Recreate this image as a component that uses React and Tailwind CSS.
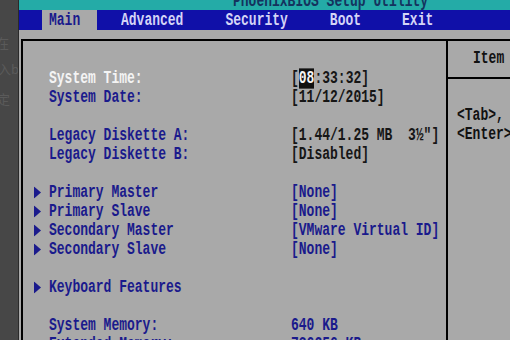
import React from 'react';

const Arrow = () => (
  <svg width="7" height="9" viewBox="0 0 7 9" className="block">
    <polygon points="0,0 7,4.5 0,9" fill="#1a1a8c" />
  </svg>
);

const rows = [
  { label: 'System Time:', value: 'time', labelCls: 'text-[#f4f4f4]' },
  { label: 'System Date:', value: '[11/12/2015]', valueCls: 'text-[#161616]' },
  null,
  { label: 'Legacy Diskette A:', value: '[1.44/1.25 MB  3½"]', valueCls: 'text-[#161616]' },
  { label: 'Legacy Diskette B:', value: '[Disabled]', valueCls: 'text-[#161616]' },
  null,
  { label: 'Primary Master', value: '[None]', arrow: true },
  { label: 'Primary Slave', value: '[None]', arrow: true },
  { label: 'Secondary Master', value: '[VMware Virtual ID]', arrow: true },
  { label: 'Secondary Slave', value: '[None]', arrow: true },
  null,
  { label: 'Keyboard Features', arrow: true },
  null,
  { label: 'System Memory:', value: '640 KB' },
  { label: 'Extended Memory:', value: '736256 KB' },
];

const Row = ({ row }) => {
  if (!row) return <div className="h-[19px] shrink-0" />;
  return (
    <div className="h-[19px] shrink-0 flex items-center pl-[11px] scale-y-[1.35] whitespace-pre">
      <div className="w-[15px] flex items-center">{row.arrow && <Arrow />}</div>
      <div className={`w-[242px] ${row.labelCls || 'text-[#1a1a8c]'}`}>{row.label}</div>
      {row.value === 'time' ? (
        <div className="text-[#161616]">
          [<span className="bg-[#101010] text-[#f4f4f4]">08</span>:33:32]
        </div>
      ) : (
        row.value && <div className={row.valueCls || 'text-[#1a1a8c]'}>{row.value}</div>
      )}
    </div>
  );
};

export default function App() {
  return (
    <div className="flex w-[510px] h-[340px] overflow-hidden bg-[#474747] font-['Liberation_Mono',monospace] text-[13px] font-bold leading-none">
      {/* page behind the VM window */}
      <div className="w-[19px] shrink-0 overflow-hidden border-r border-[#2a2a2a] text-[#5a5a5a] font-normal font-['Noto_Sans_CJK_SC',sans-serif] text-[13px] leading-[13px]">
        <div className="mt-[36px] -ml-[4px] whitespace-nowrap">在</div>
        <div className="mt-[13px] -ml-[2px] whitespace-nowrap">入b</div>
        <div className="mt-[17px] -ml-[3px] whitespace-nowrap">定</div>
      </div>

      <div className="flex-1 flex flex-col bg-[#a9a9a9] min-w-0 min-h-0">
        <div className="h-[10px] shrink-0 bg-[#24aba7] overflow-hidden">
          <div className="h-[19px] -mt-[8px] flex items-center pl-[214px] text-[#14335e] scale-y-[1.35] whitespace-pre">
            PhoenixBIOS Setup Utility
          </div>
        </div>

        <div className="h-[20px] shrink-0 bg-[#1010a8] flex items-stretch pl-[23px] text-[#d4d4f6] whitespace-pre">
          <div className="w-[55px] pl-[7px] bg-[#a9a9a9] text-[#1a1a8c] flex items-center">
            <span className="scale-y-[1.35]">Main</span>
          </div>
          <div className="ml-[24px] flex items-center"><span className="scale-y-[1.35]">Advanced</span></div>
          <div className="ml-[42px] flex items-center"><span className="scale-y-[1.35]">Security</span></div>
          <div className="ml-[42px] flex items-center"><span className="scale-y-[1.35]">Boot</span></div>
          <div className="ml-[41px] flex items-center"><span className="scale-y-[1.35]">Exit</span></div>
        </div>

        <div className="h-[9px] shrink-0" />

        <div className="flex-1 min-h-0 overflow-hidden flex ml-[2px] border-t-2 border-l-2 border-black">
          <div className="w-[423px] shrink-0 pt-[9px] flex flex-col">
            <div className="h-[19px] shrink-0" />
            {rows.map((r, i) => (
              <Row key={i} row={r} />
            ))}
          </div>

          <div className="flex-1 border-l-2 border-black text-[#111] whitespace-pre">
            <div className="h-[38px] border-b-2 border-black pt-[8px]">
              <div className="h-[19px] flex items-center pl-[25px] scale-y-[1.35]">Item</div>
            </div>
            <div className="pt-[27px] pl-[9px]">
              <div className="h-[19px] flex items-center scale-y-[1.35]">&lt;Tab&gt;,</div>
              <div className="h-[19px] flex items-center scale-y-[1.35]">&lt;Enter&gt;</div>
            </div>
          </div>
        </div>
      </div>
    </div>
  );
}
